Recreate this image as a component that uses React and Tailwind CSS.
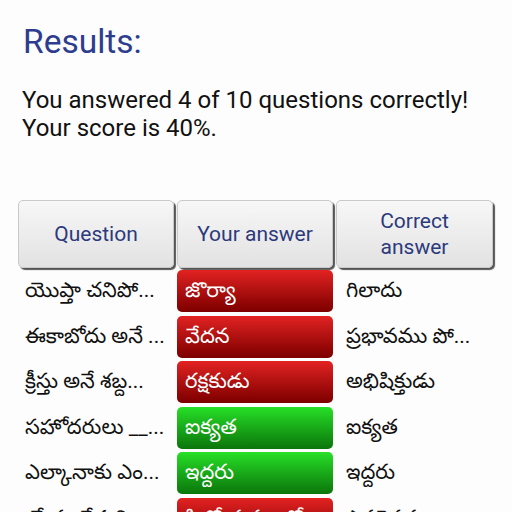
import React from "react";

const rows = [
  { q: "యొప్తా చనిపో...", a: "జొర్యా", c: "గిలాదు", ok: false },
  { q: "ఈకాబోదు అనే ...", a: "వేదన", c: "ప్రభావము పో...", ok: false },
  { q: "క్రీస్తు అనే శబ్ద...", a: "రక్షకుడు", c: "అభిషిక్తుడు", ok: false },
  { q: "సహోదరులు __...", a: "ఐక్యత", c: "ఐక్యత", ok: true },
  { q: "ఎల్కానాకు ఎం...", a: "ఇద్దరు", c: "ఇద్దరు", ok: true },
  { q: "యేసు దేవుని ...", a: "సిలోయము తో...", c: "ఎవరెవరు ...", ok: false },
];

const font = { fontFamily: "Roboto, 'Noto Sans Telugu', 'Noto Sans', sans-serif" };

function HeaderCell({ children }) {
  return (
    <div className="h-[68px] rounded-[5px] bg-gradient-to-b from-[#f7f7f7] to-[#e2e2e2] border border-[#c9c9c9] shadow-[2px_2px_1px_#555] flex items-center justify-center text-center text-[21px] leading-[26px] text-[#2c3a7c]">
      {children}
    </div>
  );
}

export default function App() {
  return (
    <div className="w-[512px] h-[512px] overflow-hidden bg-[#fdfdfd]" style={font}>
      <div className="pl-[23px] pt-[22px] text-[33.5px] leading-[40px] text-[#2d3c8e]">Results:</div>
      <div className="pl-[22px] pt-[24px] text-[24px] leading-[28px] text-[#111]">
        <div>You answered 4 of 10 questions correctly!</div>
        <div>Your score is 40%.</div>
      </div>
      <div className="mt-[58px] ml-[18px] w-[477px]">
        <div className="grid grid-cols-[156px_156px_157px] gap-x-[3px]">
          <HeaderCell>Question</HeaderCell>
          <HeaderCell>Your answer</HeaderCell>
          <HeaderCell>
            Correct
            <br />
            answer
          </HeaderCell>
        </div>
        <div className="mt-[2px] flex flex-col gap-[3.5px]">
          {rows.map((r, i) => (
            <div key={i} className="grid grid-cols-[156px_156px_157px] gap-x-[3px] h-[42px]">
              <div className="flex items-center pl-[7px] text-[21px] text-[#111] whitespace-nowrap overflow-hidden">{r.q}</div>
              <div
                className={
                  "flex items-center pl-[8px] rounded-[5px] text-[21px] text-white whitespace-nowrap overflow-hidden " +
                  (r.ok
                    ? "bg-gradient-to-b from-[#27e027] to-[#0b760b]"
                    : "bg-gradient-to-b from-[#e32222] to-[#7d0000]")
                }
              >
                {r.a}
              </div>
              <div className="flex items-center pl-[10px] text-[21px] text-[#111] whitespace-nowrap overflow-hidden">{r.c}</div>
            </div>
          ))}
        </div>
      </div>
    </div>
  );
}
